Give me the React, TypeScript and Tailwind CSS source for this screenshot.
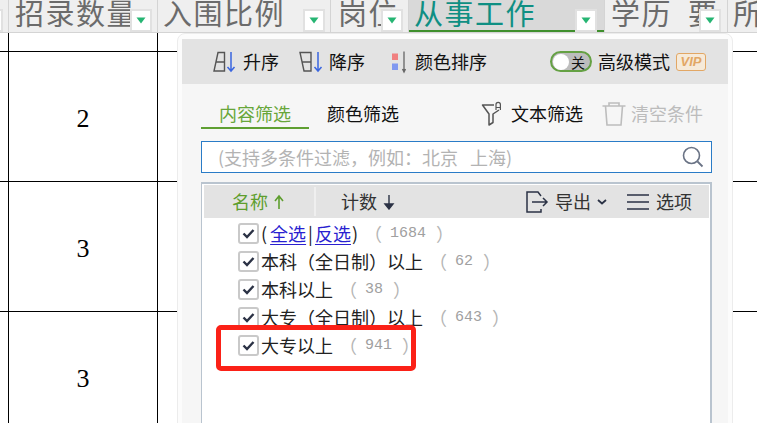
const cjk = { fontFamily: '"Noto Sans CJK SC", sans-serif' };
const serif = { fontFamily: '"Liberation Serif", "Noto Sans CJK SC", serif' };
const mono = { fontFamily: '"Liberation Mono", monospace' };

function Drop({ right = 'right-[5px]' }: { right?: string }) {
  return (
    <span className={`absolute bottom-0 flex h-[23px] w-[22px] items-center justify-center border-2 border-[#e1e1e1] bg-white ${right}`}>
      <svg width="10" height="7" viewBox="0 0 10 7"><path d="M0.5 0.5h9L5 6.5z" fill="#26b573" /></svg>
    </span>
  );
}

function Head({ w, text, active, btn = true, pl = 'pl-[6px]', right }: { w: string; text: string; active?: boolean; btn?: boolean; pl?: string; right?: string }) {
  return (
    <div className={`relative h-full shrink-0 overflow-hidden border-r border-[#d4d4d4] ${w} ${pl} ${active ? 'bg-[#d9d9d9] text-[#0f8f83]' : 'text-[#6b6b6b]'}`}>
      <div className="-mt-[6px] whitespace-pre text-[29px] leading-[36px] tracking-[1.5px]" style={cjk}>{text}</div>
      {active && <span className="absolute bottom-0 left-0 h-[2px] w-full bg-[#3f8f2d]" />}
      {btn && <Drop right={right} />}
    </div>
  );
}

function Row({ children }: { children?: React.ReactNode }) {
  return (
    <div className="flex h-[130px] border-b border-black">
      <div className="w-[9px] shrink-0 border-r border-black" />
      <div className="flex w-[149px] shrink-0 items-center justify-center border-r border-black pt-[3px] text-[26px] text-black" style={serif}>{children}</div>
      <div className="flex-1" />
    </div>
  );
}

function Check() {
  return (
    <span className="mr-[2px] flex h-[21px] w-[21px] shrink-0 items-center justify-center rounded-[3px] border-2 border-[#c9c9c9] bg-white">
      <svg width="13" height="11" viewBox="0 0 13 11"><path d="M1.5 5.5l3.5 3.5 6.5-7" fill="none" stroke="#2b3245" strokeWidth="2.4" /></svg>
    </span>
  );
}

function Item({ label, count }: { label: React.ReactNode; count: string }) {
  return (
    <div className="flex h-[28px] items-center text-[18px] leading-none text-[#222]" style={cjk}>
      <Check />
      <span className="whitespace-nowrap">{label}</span>
      <span className="ml-[6px] text-[#b5b5b5]">（</span>
      <span className="ml-[8px] text-[15px] text-[#a0a0a0]" style={mono}>{count}</span>
      <span className="ml-[10px] text-[#b5b5b5]">）</span>
    </div>
  );
}

export default function App() {
  return (
    <div className="relative h-[423px] w-[757px] overflow-hidden bg-white">
      <div className="flex h-[33px] border-b border-[#d4d4d4] bg-[#efefef]">
        <div className="relative w-[9px] shrink-0 overflow-hidden border-r border-[#d4d4d4]">
          <span className="absolute bottom-0 right-[5px] h-[23px] w-[22px] border-2 border-[#e1e1e1] bg-white" />
        </div>
        <Head w="w-[149px]" text="招录数量" />
        <Head w="w-[173px]" text="入围比例" pl="pl-[5px]" />
        <Head w="w-[78px]" text="岗位" pl="pl-[7px]" />
        <Head w="w-[196px]" text="从事工作" active pl="pl-[5px]" right="right-[7px]" />
        <Head w="w-[123px]" text="学历  要" pl="pl-[6px]" right="right-[6px]" />
        <Head w="w-[30px]" text="所" btn={false} pl="pl-[5px]" />
      </div>
      <div className="flex h-[19px] border-b border-black">
        <div className="w-[9px] shrink-0 border-r border-black" />
        <div className="w-[149px] shrink-0 border-r border-black" />
        <div className="w-[173px] shrink-0 border-r border-black" />
      </div>
      <Row>2</Row>
      <Row>3</Row>
      <Row>3</Row>

      {/* Filter popup */}
      <div className="absolute left-[177px] top-[33px] h-[400px] w-[556px] rounded-t-[8px] border border-[#ececec] bg-[#fcfcfc] px-[4px] pt-[5px]" style={cjk}>
        <div className="flex h-full flex-col bg-[#f6f6f6]">
          <div className="flex h-[45px] shrink-0 items-center bg-[#e3e3e3] pl-[31px] pr-[22px] text-[18px] text-[#111]">
            <svg width="24" height="24" viewBox="0 0 24 24" fill="none" className="mr-[6px]">
              <path d="M5 2.5h6.5V21H1z M3 12h8.5" stroke="#555" strokeWidth="1.4" />
              <path d="M18 2v19M14.5 17l3.5 4 3.5-4" stroke="#3a66e0" strokeWidth="1.5" />
            </svg>
            <span>升序</span>
            <svg width="24" height="24" viewBox="0 0 24 24" fill="none" className="ml-[20px] mr-[6px]">
              <path d="M1 2.5h11V21H5z M3 12h9" stroke="#555" strokeWidth="1.4" />
              <path d="M19 2v19M15.5 17l3.5 4 3.5-4" stroke="#3a66e0" strokeWidth="1.5" />
            </svg>
            <span>降序</span>
            <svg width="16" height="24" viewBox="0 0 16 24" fill="none" className="ml-[25px] mr-[9px]">
              <rect x="2" y="3.5" width="6" height="6.5" fill="#f08080" />
              <rect x="2" y="13.5" width="6" height="6.5" fill="#8098f0" />
              <path d="M14 1.5V22M12.5 19l1.5 3 1.5-3" stroke="#666" strokeWidth="1.3" />
            </svg>
            <span>颜色排序</span>
            <span className="ml-auto flex h-[21px] w-[42px] items-center rounded-full border-2 border-[#65a144] bg-[#bdbdbd]">
              <span className="ml-[1px] h-[16px] w-[16px] rounded-full bg-white" />
              <span className="ml-[2px] text-[14px] leading-none text-[#111]">关</span>
            </span>
            <span className="ml-[6px]">高级模式</span>
            <span className="ml-[6px] flex h-[18px] w-[30px] items-center justify-center rounded-[3px] border-[1.5px] border-[#e2a765] bg-[#f6ead9] text-[13px] font-bold italic leading-none text-[#e2a765]" style={{ fontFamily: '"Liberation Sans", sans-serif' }}>VIP</span>
          </div>

          <div className="flex h-[57px] shrink-0 items-start pl-[19px] pr-[25px] pt-[16px] text-[18px] text-[#111]">
            <div className="flex h-[29px] w-[108px] justify-center border-b-2 border-[#5f9f32] leading-[27px] text-[#68a63a]">内容筛选</div>
            <div className="ml-[18px] h-[29px] leading-[27px]">颜色筛选</div>
            <svg width="22" height="26" viewBox="0 0 22 26" fill="none" className="ml-auto mr-[8px]">
              <path d="M13 5H1.5L8 14V25l4-2.5V14L18 10" stroke="#555" strokeWidth="1.5" strokeLinejoin="round" />
              <path d="M15 10V4.5a2.2 2.2 0 0 1 4.4 0V10M15 7.5h4.4" stroke="#555" strokeWidth="1.2" />
            </svg>
            <span className="leading-[27px]">文本筛选</span>
            <svg width="24" height="26" viewBox="0 0 24 26" fill="none" className="ml-[19px] mr-[5px]">
              <path d="M0.5 6h23M7 6V3h10v3M3.5 6l1.5 19h14l1.5-19" stroke="#bdbdbd" strokeWidth="1.6" />
            </svg>
            <span className="leading-[27px] text-[#bcbcbc]">清空条件</span>
          </div>

          <div className="ml-[19px] flex h-[32px] w-[511px] shrink-0 items-center border border-[#2a7cc7] bg-white pl-[16px] pr-[7px] text-[18px] text-[#b3b3b3]">
            <span className="whitespace-pre">(支持多条件过滤，例如：北京<span className="ml-[12px]">上海)</span></span>
            <svg width="22" height="22" viewBox="0 0 22 22" fill="none" className="ml-auto">
              <circle cx="9.5" cy="9.5" r="8" stroke="#6a7385" strokeWidth="1.6" />
              <path d="M15.5 15.5l5 5" stroke="#6a7385" strokeWidth="1.8" />
            </svg>
          </div>

          <div className="ml-[19px] mt-[9px] w-[511px] flex-1 border-r-2 border-l border-t-2 border-[#b9c4cf] bg-white pl-[2px] pr-[1px] pt-[1px]">
            <div className="flex h-[33px] items-center bg-[#e3e3e3] text-[18px] text-[#333]">
              <div className="flex h-[29px] w-[112px] items-center border-r-2 border-[#efefef] pl-[28px] text-[#5e9e2e]">
                名称
                <svg width="12" height="16" viewBox="0 0 12 16" fill="none" className="ml-[5px]"><path d="M6 15V3M2 7l4-5 4 5" stroke="#5e9e2e" strokeWidth="1.6" /></svg>
              </div>
              <span className="ml-[25px]">计数</span>
              <svg width="12" height="16" viewBox="0 0 12 16" fill="none" className="ml-[6px]"><path d="M6 1v12M2 10l4 5 4-5z" fill="#2b3245" stroke="#2b3245" strokeWidth="1.4" /></svg>
              <svg width="24" height="24" viewBox="0 0 24 24" fill="none" className="ml-[130px] mr-[6px]">
                <path d="M16 6l-3-4H2v20h14v-3M7 12h15M18 8l4 4-4 4" stroke="#2b3245" strokeWidth="1.5" />
              </svg>
              <span>导出</span>
              <svg width="10" height="6" viewBox="0 0 10 6" fill="none" className="ml-[6px]"><path d="M1 1l4 3.5L9 1" stroke="#2b3245" strokeWidth="1.8" /></svg>
              <svg width="22" height="18" viewBox="0 0 22 18" fill="none" className="ml-[20px] mr-[7px]"><path d="M0 2h22M0 9h22M0 16h22" stroke="#2b3245" strokeWidth="1.4" /></svg>
              <span>选项</span>
            </div>
            <div className="pl-[34px] pt-[1px]">
              <Item count="1684" label={<>(<span className="ml-[3px] text-[#2a1fd0] underline underline-offset-[3px]">全选</span><span className="mx-[2px]">|</span><span className="text-[#2a1fd0] underline underline-offset-[3px]">反选</span><span className="ml-[1px]">)</span></>} />
              <Item label="本科（全日制）以上" count="62" />
              <Item label="本科以上" count="38" />
              <Item label="大专（全日制）以上" count="643" />
              <Item label="大专以上" count="941" />
            </div>
          </div>
        </div>
      </div>

      {/* Red annotation */}
      <div className="absolute left-[216px] top-[325px] h-[46px] w-[200px] rounded-[5px] border-[5px] border-[#fb2117]" />
    </div>
  );
}
